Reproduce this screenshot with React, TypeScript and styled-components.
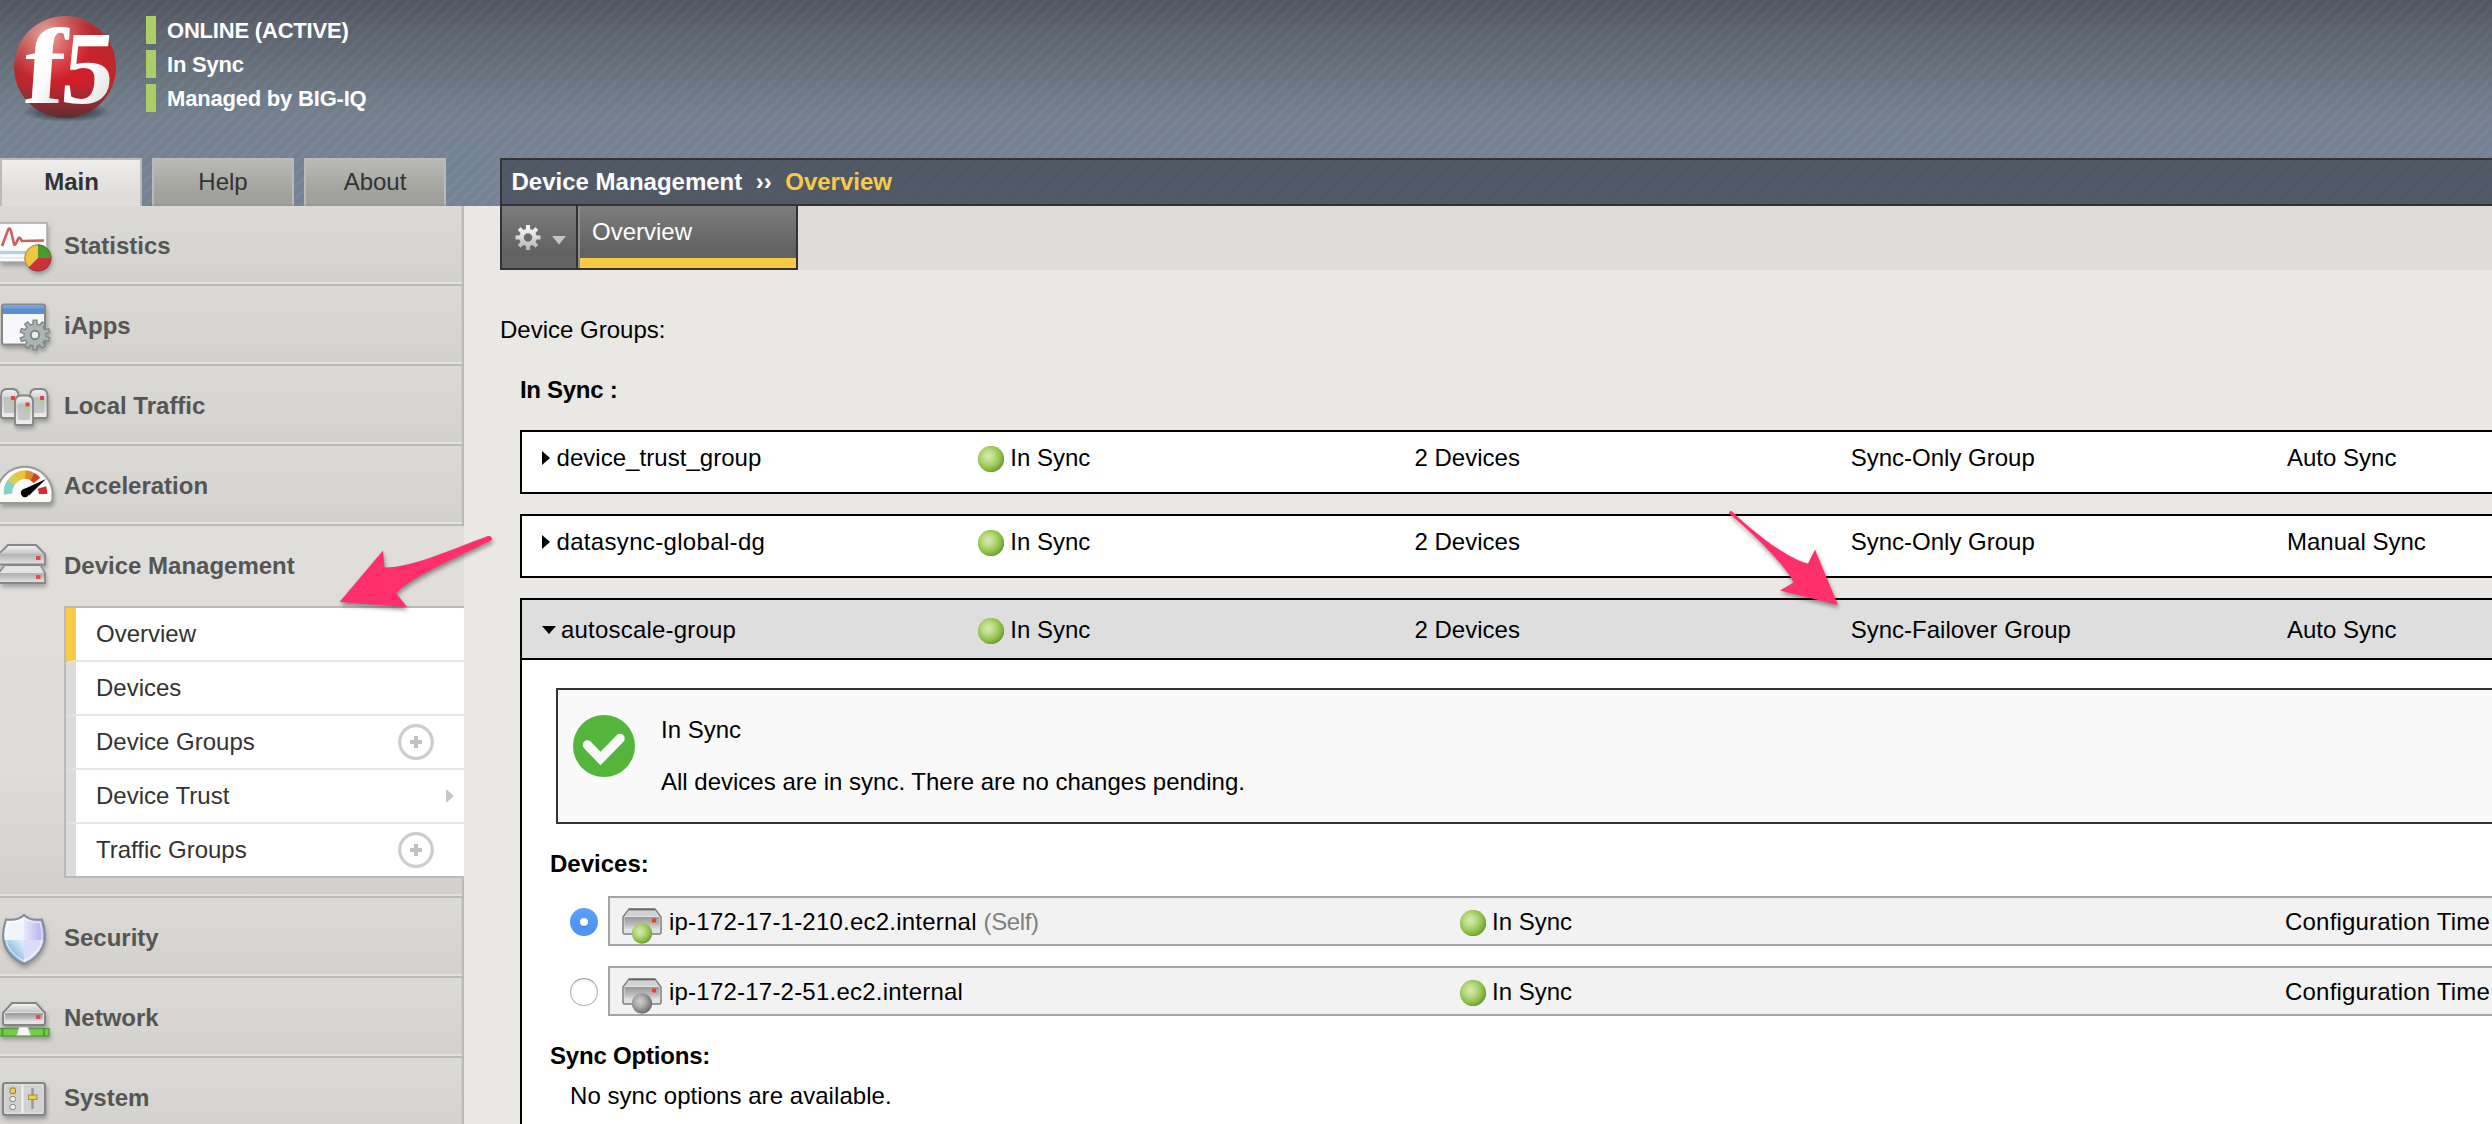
import React from 'react';
import styled, { createGlobalStyle, css } from 'styled-components';

const GlobalStyle = createGlobalStyle`
  *, *::before, *::after { box-sizing: border-box; }
  html, body { margin: 0; padding: 0; background: #e9e8e4; overflow: hidden; }
  body {
    font-family: "Liberation Sans", Arial, Helvetica, sans-serif;
    font-size: 24px;
    line-height: 28px;
    color: #000;
    font-variant-ligatures: none;
  }
`;

const Page = styled.div`
  position: relative;
  width: 2492px;
  height: 1124px;
  overflow: hidden;
  background: #e9e8e4;
`;

/* ---------- header ---------- */

const Header = styled.header`
  height: 206px;
  display: flex;
  flex-direction: column;
  background:
    repeating-linear-gradient(135deg, rgba(255, 255, 255, 0.022) 0 3.2px, rgba(0, 0, 0, 0.01) 4.4px 7.2px, rgba(255, 255, 255, 0.022) 8.485px),
    linear-gradient(#535661 0, #5c636f 30px, #697480 75px, #748190 120px, #758395 150px, #768497 206px);
`;

const Brand = styled.div`
  height: 158px;
  display: flex;
  align-items: flex-start;
`;

const Logo = styled.svg`
  width: 146px;
  height: 130px;
  flex: none;
`;

const StatusList = styled.ul`
  list-style: none;
  margin: 0;
  padding: 16px 0 0;
  display: flex;
  flex-direction: column;
  gap: 6px;
`;

const StatusLine = styled.li`
  height: 28px;
  border-left: 10px solid #a9cf66;
  padding-left: 11px;
  color: #fff;
  font-size: 22px;
  font-weight: bold;
  line-height: 29px;
  letter-spacing: -0.2px;
  white-space: nowrap;
`;

const HeaderBottom = styled.div`
  display: flex;
  height: 48px;
`;

const Tabs = styled.nav`
  width: 500px;
  display: flex;
  gap: 10px;
`;

const Tab = styled.a<{ $active?: boolean }>`
  width: 142px;
  height: 48px;
  border: 2px solid #bababa;
  border-bottom-color: #999;
  text-align: center;
  line-height: 44px;
  color: #333;
  background: linear-gradient(#b9b9b5, #a2a29d 75%);
  ${p => p.$active && css`
    font-weight: bold;
    border-bottom: 0;
    padding-left: 1px;
    background: linear-gradient(#efeeec, #dedddA 75%);
  `}
`;

const Breadcrumb = styled.div`
  flex: 1;
  height: 48px;
  border: 2px solid #333;
  border-right: 0;
  background: rgba(48, 50, 58, 0.52);
  color: #fff;
  font-weight: bold;
  line-height: 44px;
  padding-left: 9.5px;
  display: flex;
  white-space: pre;
`;

const Crumb = styled.span<{ $current?: boolean }>`
  color: ${p => (p.$current ? '#f8cb46' : '#fff')};
`;

const Separator = styled.span`
  margin: 0 13.5px;
`;

/* ---------- sidebar ---------- */

const Body = styled.div`
  display: flex;
  height: 918px;
`;

const Sidebar = styled.aside`
  width: 464px;
  flex: none;
`;

const MenuSection = styled.section<{ $open?: boolean }>`
  height: ${p => (p.$open ? 372 : 80)}px;
  border-bottom: 2px solid #bababa;
  background:
    linear-gradient(#e3e2de, #e3e2de) 0 100% / calc(100% - 2px) 2px no-repeat,
    linear-gradient(#bababa, #bababa) 100% 0 / 2px 100% no-repeat,
    linear-gradient(#cdccc8, #cdccc8) calc(100% - 2px) 0 / 1px 100% no-repeat,
    linear-gradient(#dbdad6, #d2d1cd);
  ${p => p.$open && css`
    background:
      linear-gradient(#e3e2de, #e3e2de) 0 100% / calc(100% - 2px) 2px no-repeat,
      linear-gradient(#bababa, #bababa) 100% 100% / 2px 20px no-repeat,
      linear-gradient(#dfdeda, #dedddA 240px, #d1d0cc);
  `}
`;

const MenuTitle = styled.div`
  height: 78px;
  display: flex;
  align-items: flex-start;
  color: #555;
  font-weight: bold;
`;

const MenuLabel = styled.span`
  padding-top: 26px;
`;

const MenuIcon = styled.svg`
  width: 64px;
  height: 78px;
  flex: none;
  filter: drop-shadow(1px 3px 2px rgba(0, 0, 0, 0.28));
`;

const SubMenu = styled.ul`
  list-style: none;
  margin: 2px 0 0 64px;
  padding: 0;
  border: 2px solid #bababa;
  border-right: 0;
`;

const SubItem = styled.li<{ $active?: boolean }>`
  height: 54px;
  background: #fff;
  border-left: 10px solid ${p => (p.$active ? '#f8cb46' : '#dcdcdc')};
  border-bottom: 2px solid #e6e6e6;
  padding: 0 30px 0 20px;
  display: flex;
  align-items: center;
  justify-content: space-between;
  color: #333;
  &:last-child { border-bottom: 0; height: 52px; }
`;

const CircleIcon = styled.svg`
  width: 36px;
  height: 36px;
`;

const FlyoutArrow = styled.svg`
  width: 8px;
  height: 16px;
  margin-right: -20px;
`;

/* ---------- main column ---------- */

const Content = styled.main`
  flex: 1;
  min-width: 0;
  padding-left: 36px;
  overflow: hidden;
`;

const TabBar = styled.div`
  height: 64px;
  background: #dedddA;
  display: flex;
`;

const GearButton = styled.div`
  width: 78px;
  height: 64px;
  border: 2px solid #333;
  border-top: 0;
  background: linear-gradient(#7d7d7d, #626262 75%);
  svg { display: block; }
`;

const PageTab = styled.div`
  width: 220px;
  height: 64px;
  border: solid #333;
  border-width: 0 2px 2px 0;
  background: linear-gradient(#8c8c8c, #8c8c8c) 0 0 / 2px 100% no-repeat;
  padding-left: 2px;
`;

const PageTabLabel = styled.div`
  height: 62px;
  border-bottom: 10px solid #f8cb46;
  background: linear-gradient(#7d7d7d, #626262 85%);
  color: #fff;
  padding: 12px 0 0 12px;
`;

const Intro = styled.div`
  margin-top: 46px;
`;

const Groups = styled.div`
  padding-left: 20px;
  display: flex;
  flex-direction: column;
`;

const GroupsTitle = styled.div`
  margin: 32px 0 26px;
  font-weight: bold;
  letter-spacing: -0.3px;
`;

const GroupPanel = styled.div<{ $open?: boolean }>`
  border: 2px solid #000;
  border-right: 0;
  background: #fff;
  height: ${p => (p.$open ? 600 : 64)}px;
  margin-bottom: 20px;
  flex: none;
`;

const GroupRow = styled.div<{ $open?: boolean }>`
  height: 60px;
  display: grid;
  grid-template-columns: 436.25px 436.25px 436.25px 436.25px 300px;
  padding: ${p => (p.$open ? 16 : 12)}px 0 0 20px;
  white-space: nowrap;
  ${p => p.$open && css`
    background: #dedede;
    border-bottom: 2px solid #000;
  `}
`;

const Cell = styled.div<{ $gap?: number; $tracking?: number }>`
  display: flex;
  gap: ${p => p.$gap ?? 0}px;
  letter-spacing: ${p => p.$tracking ?? 0}px;
  svg { flex: none; display: block; }
`;

const BallSvg = styled.svg`
  width: 26px;
  height: 26px;
  margin-top: 2px;
`;

const Notice = styled.div`
  margin: 28px 0 0 34px;
  height: 136px;
  border: 2px solid #333;
  border-right: 0;
  background: #f9f9f9;
  display: flex;
  padding: 25px 0 0 15px;
`;

const NoticeIcon = styled.svg`
  width: 62px;
  height: 62px;
  flex: none;
`;

const NoticeText = styled.div`
  margin: 0 0 0 26px;
  padding-top: 1px;
  display: flex;
  flex-direction: column;
  gap: 24px;
`;

const Subheading = styled.div<{ $top: number; $tracking?: number }>`
  margin: ${p => p.$top}px 0 0 28px;
  font-weight: bold;
  letter-spacing: ${p => p.$tracking ?? 0}px;
`;

const DeviceLine = styled.div`
  margin-bottom: 20px;
  padding-left: 48px;
  display: flex;
  align-items: flex-start;
`;

const DeviceList = styled.div`
  padding-top: 18px;
`;

const Radio = styled.span<{ $checked?: boolean }>`
  width: 28px;
  height: 28px;
  margin: 12px 10px 0 0;
  flex: none;
  border-radius: 50%;
  display: grid;
  place-items: center;
  ${p => (p.$checked
    ? css`
      background: linear-gradient(#5b9ff8, #4b92f6);
      &::after {
        content: '';
        width: 8px;
        height: 8px;
        border-radius: 50%;
        background: #fff;
        box-shadow: 0 1px 1px rgba(0, 40, 120, 0.35);
      }
    `
    : css`
      background: #fff;
      border: 1px solid #b3b3b3;
      border-top-color: #9a9a9a;
      box-shadow: inset 0 1px 2px rgba(0, 0, 0, 0.12);
    `)}
`;

const DeviceBox = styled.div`
  flex: 1;
  height: 50px;
  border: 2px solid #a5a5a5;
  border-right: 0;
  background: #f2f2f2;
  display: grid;
  grid-template-columns: 838px 825px 1fr;
  padding: 10px 0 0 12px;
  white-space: nowrap;
`;

const DeviceSvg = styled.svg`
  width: 40px;
  height: 36px;
`;

const DeviceName = styled.span`
  margin-left: 7px;
  letter-spacing: 0.22px;
`;

const SelfNote = styled.span`
  color: #808080;
  letter-spacing: -0.4px;
`;

const PlainNote = styled.div`
  margin: 12px 0 0 48px;
  letter-spacing: 0.05px;
`;

const Annotations = styled.svg`
  position: absolute;
  left: 0;
  top: 0;
  width: 2492px;
  height: 1124px;
  pointer-events: none;
  filter: drop-shadow(1px 3px 2px rgba(0, 0, 0, 0.4));
`;

/* ---------- drawings ---------- */

const gearPath = (cx: number, cy: number, teeth: number, outer: number, inner: number) => {
  const pts: string[] = [];
  const step = (Math.PI * 2) / teeth;
  for (let i = 0; i < teeth; i++) {
    const a = i * step - Math.PI / 2;
    const corners: [number, number][] = [[-0.3, inner], [-0.2, outer], [0.2, outer], [0.3, inner]];
    corners.forEach(([k, r]) => {
      pts.push(`${(cx + r * Math.cos(a + k * step)).toFixed(2)},${(cy + r * Math.sin(a + k * step)).toFixed(2)}`);
    });
  }
  return `M${pts.join('L')}Z`;
};

const SharedDefs = styled.svg`
  position: absolute;
  width: 0;
  height: 0;
`;

const Defs = () => (
  <SharedDefs>
    <defs>
      <radialGradient id="green" cx="0.4" cy="0.4" r="0.62">
        <stop offset="0" stopColor="#d6ebb0" />
        <stop offset="0.35" stopColor="#bcdc88" />
        <stop offset="0.75" stopColor="#8dc044" />
        <stop offset="1" stopColor="#6d9a3c" />
      </radialGradient>
      <radialGradient id="gray" cx="0.4" cy="0.4" r="0.62">
        <stop offset="0" stopColor="#cfcfcf" />
        <stop offset="0.4" stopColor="#b0b0b0" />
        <stop offset="1" stopColor="#6c6c6c" />
      </radialGradient>
      <linearGradient id="lid" x1="0" y1="0" x2="0" y2="1">
        <stop offset="0" stopColor="#f0f0f0" />
        <stop offset="1" stopColor="#c4c4c4" />
      </linearGradient>
      <linearGradient id="face" x1="0" y1="0" x2="0" y2="1">
        <stop offset="0" stopColor="#999" />
        <stop offset="0.55" stopColor="#b9b9b9" />
        <stop offset="1" stopColor="#e6e6e6" />
      </linearGradient>
      <linearGradient id="tower" x1="0" y1="0" x2="0" y2="1">
        <stop offset="0" stopColor="#f2f2f2" />
        <stop offset="0.35" stopColor="#cfcfcf" />
        <stop offset="1" stopColor="#f0f0f0" />
      </linearGradient>
    </defs>
  </SharedDefs>
);

const F5Logo = () => (
  <Logo viewBox="0 0 146 130">
    <defs>
      <radialGradient id="ball" cx="0.55" cy="0.6" r="0.62">
        <stop offset="0" stopColor="#d21f2a" />
        <stop offset="0.55" stopColor="#c8232c" />
        <stop offset="0.85" stopColor="#b3292e" />
        <stop offset="1" stopColor="#9c4a48" />
      </radialGradient>
      <radialGradient id="shine" cx="0.32" cy="0.2" r="0.45">
        <stop offset="0" stopColor="#f3c9bb" stopOpacity="0.85" />
        <stop offset="1" stopColor="#e88" stopOpacity="0" />
      </radialGradient>
      <linearGradient id="shade" x1="0" y1="0" x2="0" y2="1">
        <stop offset="0.65" stopColor="#444" stopOpacity="0" />
        <stop offset="1" stopColor="#3c3030" stopOpacity="0.75" />
      </linearGradient>
      <radialGradient id="ground">
        <stop offset="0" stopColor="#1c222c" stopOpacity="0.9" />
        <stop offset="0.6" stopColor="#2a323e" stopOpacity="0.55" />
        <stop offset="1" stopColor="#2a323e" stopOpacity="0" />
      </radialGradient>
      <linearGradient id="letters" x1="0" y1="0" x2="1" y2="1">
        <stop offset="0.5" stopColor="#fff" />
        <stop offset="1" stopColor="#d5d5d5" />
      </linearGradient>
    </defs>
    <ellipse cx="67" cy="112" rx="44" ry="10" fill="url(#ground)" />
    <circle cx="65" cy="67" r="51" fill="url(#ball)" />
    <circle cx="65" cy="67" r="51" fill="url(#shade)" />
    <circle cx="65" cy="67" r="51" fill="url(#shine)" />
    <g fontFamily="Liberation Serif" fontWeight="bold" fill="url(#letters)">
      <text transform="translate(22 103) skewX(-4) scale(1.15 1)" fontSize="108">f</text>
      <text transform="translate(59 103) skewX(-6) scale(1 1)" fontSize="104">5</text>
    </g>
  </Logo>
);

const Ball = () => (
  <BallSvg viewBox="0 0 26 26"><circle cx="13" cy="13" r="13.2" fill="url(#green)" /></BallSvg>
);

const PlusCircle = () => (
  <CircleIcon viewBox="0 0 36 36">
    <circle cx="18" cy="18" r="16.3" fill="#fff" stroke="#ccc" strokeWidth="3.2" />
    <path d="M12 18H24M18 12V24" stroke="#c2c2c2" strokeWidth="4" />
  </CircleIcon>
);

const StatisticsIcon = () => (
  <MenuIcon viewBox="0 0 64 78">
    <rect x="-2" y="17" width="49" height="39" fill="#fbfbfb" stroke="#aaa" strokeWidth="1.5" />
    <path d="M0 46.500H26" stroke="#b9cfe8" strokeWidth="3.500" />
    <path d="M0 52H26" stroke="#e3ebf4" strokeWidth="2" />
    <path d="M2 40 L8 24 Q10 20 11.500 27 L14 38 Q15 41 18 33 Q19.500 30 22 35 L44 34.500" fill="none" stroke="#c96060" strokeWidth="2.600" />
    <circle cx="38" cy="52" r="13.500" fill="#c8323c" />
    <path d="M38 52V38.500A13.500 13.500 0 0 1 51.500 52Z" fill="#4d9b2a" />
    <path d="M38 52V38.500A13.500 13.500 0 0 0 28.500 61.500Z" fill="#eec544" />
    <circle cx="38" cy="52" r="13" fill="none" stroke="#633" strokeOpacity="0.35" />
  </MenuIcon>
);

const IAppsIcon = () => (
  <MenuIcon viewBox="0 0 64 78">
    <rect x="2" y="18.500" width="43" height="40" rx="2" fill="#f8f8fc" stroke="#888" strokeWidth="2" />
    <rect x="3" y="19.500" width="41" height="8.500" fill="#5a8fd0" />
    <rect x="3" y="19.500" width="41" height="3" fill="#6fa5e0" />
    <path d={gearPath(35, 49, 10, 15, 11)} fill="#adb5b3" stroke="#7f8886" strokeWidth="1.400" />
    <circle cx="35" cy="49" r="4.200" fill="#eceeee" stroke="#7f8886" strokeWidth="2" />
  </MenuIcon>
);

const Tower = ({ x, y, w, h }: { x: number; y: number; w: number; h: number }) => (
  <g>
    <path
      d={`M${x} ${y + 7}Q${x} ${y} ${x + 6} ${y}H${x + w - 6}Q${x + w} ${y} ${x + w} ${y + 7}V${y + h - 2}Q${x + w} ${y + h} ${x + w - 2} ${y + h}H${x + 2}Q${x} ${y + h} ${x} ${y + h - 2}Z`}
      fill="url(#tower)" stroke="#858585" strokeWidth="1.8" />
    <rect x={x + 3} y={y + 8} width={w - 6} height={h - 13} fill="#b9b9b9" fillOpacity="0.7" />
    <rect x={x + w - 7.500} y={y + 7} width="4" height="4" fill="#e04050" />
    <rect x={x + w - 7.500} y={y + 11.500} width="4" height="3.500" fill="#9fdc7c" />
  </g>
);

const LocalTrafficIcon = () => (
  <MenuIcon viewBox="0 0 64 78">
    <Tower x={1} y={23} w={17.5} h={29} />
    <Tower x={30} y={23} w={17.5} h={29} />
    <Tower x={15} y={29.5} w={18} h={29.5} />
  </MenuIcon>
);

const AccelerationIcon = () => (
  <MenuIcon viewBox="0 0 64 78">
    <path d="M-3 57V45A28 28 0 0 1 52.500 45V52Q52.500 57 49 57Z" fill="#fafaf8" stroke="#999" strokeWidth="2" />
    <g fill="none" strokeWidth="8.500">
      <path d="M8 48A17.500 17.500 0 0 1 11 36.500" stroke="#7fd3cb" />
      <path d="M11 36.800A17.500 17.500 0 0 1 17 31" stroke="#d6d05a" />
      <path d="M16.500 31.300A17.500 17.500 0 0 1 26 28.500" stroke="#e9c43a" />
      <path d="M25.500 28.500A17.500 17.500 0 0 1 33 31" stroke="#e08a30" />
      <path d="M32.500 30.800A17.500 17.500 0 0 1 37 34.500" stroke="#d2402a" />
      <path d="M42 41.500Q43 45 43 48" stroke="#d22b33" />
    </g>
    <path d="M23 43.500L46 33L29 49.500Z" fill="#000" />
    <circle cx="25" cy="47" r="4.200" fill="#000" />
  </MenuIcon>
);

const DeviceManagementIcon = () => (
  <MenuIcon viewBox="0 0 64 78">
    <path d="M-3 48L5 40H40L45 47V57H-3Z" fill="url(#face)" stroke="#888" strokeWidth="1.800" />
    <path d="M5 40H40L44 47H0Z" fill="#e3e3e3" />
    <path d="M-3 30L8 19H36L45 28V38.500H-3Z" fill="url(#face)" stroke="#888" strokeWidth="1.800" />
    <path d="M0 28L8.500 20H35.500L43.500 28Z" fill="url(#lid)" />
    <rect x="36" y="30" width="4.500" height="4" fill="#e84a50" />
    <rect x="36" y="49" width="4.500" height="4" fill="#e84a50" />
  </MenuIcon>
);

const SecurityIcon = () => (
  <MenuIcon viewBox="0 0 64 78">
    <defs>
      <clipPath id="shield">
        <path d="M24 17Q30 23 42 21.500Q47 38 43 48Q38 60 24 66Q10 60 5 48Q1 38 6 21.500Q18 23 24 17Z" />
      </clipPath>
      <linearGradient id="sl" x1="0" y1="1" x2="1" y2="0">
        <stop offset="0.1" stopColor="#3a88c8" />
        <stop offset="0.9" stopColor="#d8ecf8" />
      </linearGradient>
      <linearGradient id="sr" x1="0" y1="0" x2="1" y2="0">
        <stop offset="0" stopColor="#e9e8fa" />
        <stop offset="1" stopColor="#a5a2ea" />
      </linearGradient>
    </defs>
    <g clipPath="url(#shield)">
      <rect x="0" y="14" width="24" height="28" fill="#eef6fb" />
      <rect x="24" y="14" width="24" height="28" fill="url(#sr)" />
      <rect x="0" y="42" width="24" height="28" fill="url(#sl)" />
      <rect x="24" y="42" width="24" height="28" fill="#dcdcf8" />
    </g>
    <path d="M24 17Q30 23 42 21.500Q47 38 43 48Q38 60 24 66Q10 60 5 48Q1 38 6 21.500Q18 23 24 17Z" fill="none" stroke="#858b98" strokeWidth="2" />
    <path d="M24 20Q30 25 40 24Q44 38 40.500 47Q36 57 24 63Q12 57 7.500 47Q4 38 8 24Q18 25 24 20Z" fill="none" stroke="#fff" strokeOpacity="0.55" strokeWidth="1.500" />
  </MenuIcon>
);

const NetworkIcon = () => (
  <MenuIcon viewBox="0 0 64 78">
    <path d="M3 35L12 25H36L45 35V45Q45 47 43 47H5Q3 47 3 45Z" fill="#e4e4e4" stroke="#858585" strokeWidth="2" />
    <path d="M5 34L13 26H35L43 34Z" fill="url(#lid)" />
    <rect x="5" y="35" width="38" height="8.500" fill="url(#face)" />
    <rect x="36" y="37" width="4.500" height="4" fill="#e84a50" />
    <rect x="-2" y="50.500" width="51" height="7.500" fill="#72cc4a" stroke="#5a9a40" strokeWidth="1.400" />
    <path d="M2.500 50V58M44 50V58" stroke="#4d8a38" strokeWidth="1.400" />
    <path d="M19 49H28L31 57.500H16.500Z" fill="#f6f6f6" stroke="#aaa" strokeWidth="0.800" />
  </MenuIcon>
);

const SystemIcon = () => (
  <MenuIcon viewBox="0 0 64 78">
    <rect x="3" y="25" width="42" height="32" rx="2.500" fill="#ddd" stroke="#858585" strokeWidth="2.200" />
    <rect x="5.500" y="27.500" width="16" height="27" fill="#cfcfcf" />
    <rect x="23.500" y="27.500" width="19" height="27" fill="#d2d2d2" />
    <path d="M22.500 27V55" stroke="#f4f4f4" strokeWidth="1.500" />
    <rect x="10" y="30" width="5.500" height="5.500" rx="1.500" fill="#f0d040" stroke="#8c7c30" />
    <rect x="10" y="38.500" width="5.500" height="5" rx="2" fill="#eee" stroke="#888" />
    <rect x="10" y="46.500" width="5.500" height="5" rx="2" fill="#eee" stroke="#888" />
    <path d="M32.500 30V51" stroke="#999" strokeWidth="2.400" />
    <rect x="28.500" y="37" width="8.500" height="4.500" fill="#ecd048" stroke="#9c8830" strokeWidth="0.900" />
  </MenuIcon>
);

const DeviceIcon = ({ tone }: { tone: string }) => (
  <DeviceSvg viewBox="0 0 40 36">
    <path d="M1 9L7 1H33L39 9V24Q39 26 37.500 26H2.500Q1 26 1 24Z" fill="#e2e2e2" stroke="#808080" strokeWidth="1.500" />
    <path d="M3 8L8 2.500H32L37 8Z" fill="#d2d2d2" />
    <path d="M7 1.500H33" stroke="#666" strokeWidth="1.800" />
    <rect x="2.500" y="9" width="35" height="13" fill="url(#face)" />
    <rect x="30" y="10.500" width="4" height="4" fill="#e8402a" />
    <circle cx="20" cy="25.500" r="10.200" fill={`url(#${tone})`} />
  </DeviceSvg>
);

/* ---------- data ---------- */

type Section = { label: string; Icon: () => React.ReactElement; open?: boolean };

const sections: Section[] = [
  { label: 'Statistics', Icon: StatisticsIcon },
  { label: 'iApps', Icon: IAppsIcon },
  { label: 'Local Traffic', Icon: LocalTrafficIcon },
  { label: 'Acceleration', Icon: AccelerationIcon },
  { label: 'Device Management', Icon: DeviceManagementIcon, open: true },
  { label: 'Security', Icon: SecurityIcon },
  { label: 'Network', Icon: NetworkIcon },
  { label: 'System', Icon: SystemIcon },
];

const subItems: { label: string; mark?: 'plus' | 'arrow'; active?: boolean }[] = [
  { label: 'Overview', active: true },
  { label: 'Devices' },
  { label: 'Device Groups', mark: 'plus' },
  { label: 'Device Trust', mark: 'arrow' },
  { label: 'Traffic Groups', mark: 'plus' },
];

const groups = [
  { name: 'device_trust_group', type: 'Sync-Only Group', mode: 'Auto Sync', tracking: 0.04 },
  { name: 'datasync-global-dg', type: 'Sync-Only Group', mode: 'Manual Sync', tracking: 0.33 },
  { name: 'autoscale-group', type: 'Sync-Failover Group', mode: 'Auto Sync', tracking: 0.2, open: true },
];

const devices = [
  { name: 'ip-172-17-1-210.ec2.internal', self: true, tone: 'green' },
  { name: 'ip-172-17-2-51.ec2.internal', self: false, tone: 'gray' },
];

const GroupDetail = () => (
  <>
    <Notice>
      <NoticeIcon viewBox="0 0 62 62">
        <circle cx="31" cy="31" r="31" fill="#54b53c" />
        <path d="M14.500 30L27.500 43.500L47 23.500" fill="none" stroke="#f9f9f9" strokeWidth="9.500" strokeLinecap="round" />
      </NoticeIcon>
      <NoticeText>
        <div>In Sync</div>
        <div>All devices are in sync. There are no changes pending.</div>
      </NoticeText>
    </Notice>
    <Subheading $top={26}>Devices:</Subheading>
    <DeviceList>
      {devices.map(d => (
        <DeviceLine key={d.name}>
          <Radio $checked={d.self} />
          <DeviceBox>
            <Cell>
              <DeviceIcon tone={d.tone} />
              <DeviceName>
                {d.name} {d.self && <SelfNote>(Self)</SelfNote>}
              </DeviceName>
            </Cell>
            <Cell $gap={6}><Ball /><span>In Sync</span></Cell>
            <Cell $tracking={0.2}>Configuration Time</Cell>
          </DeviceBox>
        </DeviceLine>
      ))}
    </DeviceList>
    <Subheading $top={26} $tracking={-0.2}>Sync Options:</Subheading>
    <PlainNote>No sync options are available.</PlainNote>
  </>
);

export default function App() {
  return (
    <Page>
      <GlobalStyle />
      <Defs />
      <Header>
        <Brand>
          <F5Logo />
          <StatusList>
            <StatusLine>ONLINE (ACTIVE)</StatusLine>
            <StatusLine>In Sync</StatusLine>
            <StatusLine>Managed by BIG-IQ</StatusLine>
          </StatusList>
        </Brand>
        <HeaderBottom>
          <Tabs>
            <Tab $active>Main</Tab>
            <Tab>Help</Tab>
            <Tab>About</Tab>
          </Tabs>
          <Breadcrumb>
            <Crumb>Device Management</Crumb>
            <Separator>››</Separator>
            <Crumb $current>Overview</Crumb>
          </Breadcrumb>
        </HeaderBottom>
      </Header>
      <Body>
        <Sidebar>
          {sections.map(({ label, Icon, open }) => (
            <MenuSection key={label} $open={open}>
              <MenuTitle>
                <Icon />
                <MenuLabel>{label}</MenuLabel>
              </MenuTitle>
              {open && (
                <SubMenu>
                  {subItems.map(s => (
                    <SubItem key={s.label} $active={s.active}>
                      {s.label}
                      {s.mark === 'plus' && <PlusCircle />}
                      {s.mark === 'arrow' && (
                        <FlyoutArrow viewBox="0 0 8 16"><path d="M0 1L8 8L0 15Z" fill="#c8c8c8" /></FlyoutArrow>
                      )}
                    </SubItem>
                  ))}
                </SubMenu>
              )}
            </MenuSection>
          ))}
        </Sidebar>
        <Content>
          <TabBar>
            <GearButton>
              <svg width="74" height="62" viewBox="0 0 74 62">
                <defs>
                  <linearGradient id="cog" x1="0" y1="0" x2="0" y2="1">
                    <stop offset="0" stopColor="#fff" />
                    <stop offset="1" stopColor="#b5b5b5" />
                  </linearGradient>
                </defs>
                <path d={`${gearPath(26, 31.5, 8, 12.6, 8.8)}M21.800 31.500a4.200 4.200 0 1 0 8.400 0a4.200 4.200 0 1 0 -8.400 0Z`} fill="url(#cog)" fillRule="evenodd" />
                <path d="M50 30H64L57 38.500Z" fill="#c4c4c4" />
              </svg>
            </GearButton>
            <PageTab>
              <PageTabLabel>Overview</PageTabLabel>
            </PageTab>
          </TabBar>
          <Intro>Device Groups:</Intro>
          <Groups>
            <GroupsTitle>In Sync :</GroupsTitle>
            {groups.map(g => (
              <GroupPanel key={g.name} $open={g.open}>
                <GroupRow $open={g.open}>
                  <Cell $gap={g.open ? 5 : 6.5} $tracking={g.tracking}>
                    {g.open ? (
                      <svg width="14" height="28" viewBox="0 0 14 28"><path d="M0 10H14L7 18Z" /></svg>
                    ) : (
                      <svg width="8" height="28" viewBox="0 0 8 28"><path d="M0 7L8 14L0 21Z" /></svg>
                    )}
                    <span>{g.name}</span>
                  </Cell>
                  <Cell $gap={6}><Ball /><span>In Sync</span></Cell>
                  <Cell>2 Devices</Cell>
                  <Cell>{g.type}</Cell>
                  <Cell>{g.mode}</Cell>
                </GroupRow>
                {g.open && <GroupDetail />}
              </GroupPanel>
            ))}
          </Groups>
        </Content>
      </Body>
      <Annotations viewBox="0 0 2492 1124">
        <g fill="#ff2f6c">
          <path d="M339.500 602L383 550.500L384.500 567.500C410 568 450 550 488 536Q492 535.500 492 539.500Q491 541 488 542C455 558 412 577 396 593L407 607Z" />
          <path d="M1731.500 511C1755 534 1790 560 1808 563.500L1815 549.500L1838 605L1780 590.500L1793.500 582.500C1787 567 1752 532 1729.500 514Q1728.500 510.500 1731.500 511Z" />
        </g>
      </Annotations>
    </Page>
  );
}
